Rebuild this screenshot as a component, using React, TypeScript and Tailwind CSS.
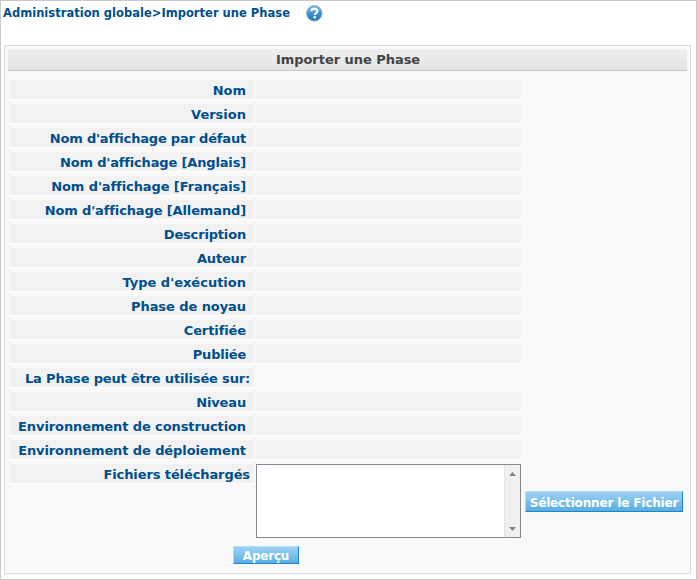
type Row = { label: string; wide?: boolean; empty?: boolean; tracking?: string };

const rows: Row[] = [
  { label: "Nom" },
  { label: "Version" },
  { label: "Nom d'affichage par défaut", tracking: "tracking-[-0.19px]" },
  { label: "Nom d'affichage [Anglais]", tracking: "tracking-[-0.16px]" },
  { label: "Nom d'affichage [Français]", tracking: "tracking-[-0.09px]" },
  { label: "Nom d'affichage [Allemand]", tracking: "tracking-[-0.13px]" },
  { label: "Description", tracking: "tracking-[-0.17px]" },
  { label: "Auteur", tracking: "tracking-[-0.15px]" },
  { label: "Type d'exécution" },
  { label: "Phase de noyau", tracking: "tracking-[-0.07px]" },
  { label: "Certifiée", tracking: "tracking-[-0.1px]" },
  { label: "Publiée", tracking: "tracking-[-0.2px]" },
  { label: "La Phase peut être utilisée sur:", wide: true, empty: true, tracking: "tracking-[-0.17px]" },
  { label: "Niveau", tracking: "tracking-[-0.15px]" },
  { label: "Environnement de construction", tracking: "tracking-[-0.1px]" },
  { label: "Environnement de déploiement", tracking: "tracking-[-0.1px]" },
];

function Label({ row }: { row: Row }) {
  return (
    <div
      className={`h-5 w-[244px] shrink-0 whitespace-nowrap border-b border-white bg-[#f2f2f2] text-right text-[13px] leading-[21px] text-[#004f8c] ${row.wide ? "pr-1" : "pr-2"} ${row.tracking ?? ""}`}
    >
      {row.label}
    </div>
  );
}

function HelpIcon() {
  return (
    <svg width="17" height="17" viewBox="0 0 17 17" className="ml-[15px] mt-px">
      <defs>
        <linearGradient id="ball" x1="0" y1="0" x2="0" y2="1">
          <stop offset="0" stopColor="#8fc4e8" />
          <stop offset="0.5" stopColor="#3f93d2" />
          <stop offset="1" stopColor="#2377b8" />
        </linearGradient>
      </defs>
      <circle cx="8.3" cy="8.3" r="7.7" fill="url(#ball)" stroke="#6b9fc4" strokeWidth="0.8" />
      <path d="M5.4 6.3C5.5 4.6 6.8 3.9 8.4 3.9C10.2 3.9 11.3 4.8 11.3 6.2C11.3 8.1 8.7 8 8.7 10.1" fill="none" stroke="#fff" strokeWidth="2.1" />
      <rect x="7.5" y="11.2" width="2.4" height="2.2" fill="#fff" />
    </svg>
  );
}

function Arrow({ down }: { down?: boolean }) {
  return (
    <svg width="7" height="4" viewBox="0 0 7 4" className={down ? "rotate-180" : ""}>
      <path d="M3.5 0L7 4H0Z" fill="#858585" />
    </svg>
  );
}

export default function App() {
  return (
    <div className="h-[580px] w-[697px] border border-[#c8c8c8] bg-white font-['DejaVu_Sans',Verdana,sans-serif] font-bold">
      <div className="flex h-[44px] items-start pl-[2px] pt-[3px]">
        <div className="w-[288px] whitespace-nowrap text-[11.5px] leading-[18px] tracking-[0.02px] text-[#004f8c]">
          Administration globale&gt;Importer une Phase
        </div>
        <HelpIcon />
      </div>
      <div className="ml-[3px] h-[529px] w-[687px] border border-[#dcdcdc] bg-[#f9f9f9] px-[3px] pt-[3px]">
        <div className="h-[22px] w-[679px] border-b border-[#c8c8c8] bg-linear-to-b from-[#efefef] to-[#e4e4e4] pl-px text-center text-[13px] leading-[21px] tracking-[-0.04px] text-[#444]">
          Importer une Phase
        </div>
        <div className="ml-[2px] mt-[9px] flex flex-col gap-1">
          {rows.map((row) => (
            <div key={row.label} className="flex gap-[2px]">
              <Label row={row} />
              {!row.empty && <div className="h-5 w-[265px] border-b border-white bg-[#f2f2f2]" />}
            </div>
          ))}
          <div className="flex items-start gap-[2px]">
            <Label row={{ label: "Fichiers téléchargés", wide: true, tracking: "tracking-[-0.1px]" }} />
            <div className="flex h-[74px] w-[265px] justify-end border border-[#828790] bg-white">
              <div className="flex w-4 flex-col items-center justify-between border-l border-[#e4e4e4] bg-[#f0f0f0] pb-[6px] pt-[7px]">
                <Arrow />
                <Arrow down />
              </div>
            </div>
            <button className="ml-[2px] mt-[27px] flex h-[21px] w-[158px] justify-center whitespace-nowrap border border-b-[#1e86c8] border-l-[#a9e2f8] border-r-[#1e86c8] border-t-[#a9e2f8] bg-linear-to-b from-[#9dd1f2] to-[#58ade2] pt-[2px] text-[12px] leading-[18px] tracking-[-0.15px] text-white">
              Sélectionner le Fichier
            </button>
          </div>
        </div>
        <button className="ml-[225px] mt-[8px] flex h-[18px] w-[66px] justify-center border border-b-[#1e86c8] border-l-[#a9e2f8] border-r-[#1e86c8] border-t-[#a9e2f8] bg-linear-to-b from-[#9dd1f2] to-[#58ade2] pt-px text-[12px] leading-[16px] tracking-[-0.2px] text-white">
          Aperçu
        </button>
      </div>
    </div>
  );
}
